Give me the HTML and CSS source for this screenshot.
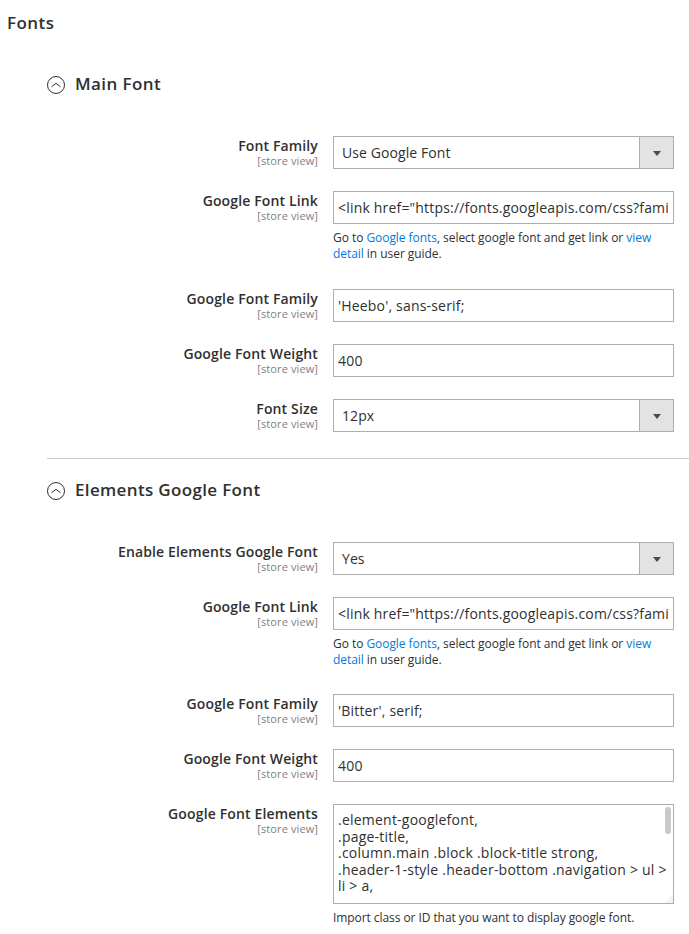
FILE: index.html
```html
<!DOCTYPE html>
<html lang="en">
<head>
<meta charset="utf-8">
<title>Fonts</title>
<link rel="stylesheet" href="styles.css">
</head>
<body>
<h1 class="page-title">Fonts</h1>
<section class="group">
  <h2 class="group-title"><svg class="toggle" viewBox="0 0 18 18"><circle cx="9" cy="9" r="8.5"/><path d="M4.5 10.8 9 7.3l4.5 3.5"/></svg>Main Font</h2>
  <div class="field"><div class="label"><b>Font Family</b><small>[store view]</small></div><div class="control"><div class="box select"><span>Use Google Font</span><i class="arrow"></i></div></div></div>
  <div class="field"><div class="label"><b>Google Font Link</b><small>[store view]</small></div><div class="control"><div class="box"><span class="value">&lt;link href="https://fonts.googleapis.com/css?fami</span></div><p class="note">Go to <a>Google fonts</a>, select google font and get link or <a>view detail</a> in user guide.</p></div></div>
  <div class="field"><div class="label"><b>Google Font Family</b><small>[store view]</small></div><div class="control"><div class="box"><span class="value">'Heebo', sans-serif;</span></div></div></div>
  <div class="field"><div class="label"><b>Google Font Weight</b><small>[store view]</small></div><div class="control"><div class="box"><span class="value">400</span></div></div></div>
  <div class="field"><div class="label"><b>Font Size</b><small>[store view]</small></div><div class="control"><div class="box select"><span>12px</span><i class="arrow"></i></div></div></div>
</section>
<section class="group">
  <h2 class="group-title"><svg class="toggle" viewBox="0 0 18 18"><circle cx="9" cy="9" r="8.5"/><path d="M4.5 10.8 9 7.3l4.5 3.5"/></svg>Elements Google Font</h2>
  <div class="field"><div class="label"><b>Enable Elements Google Font</b><small>[store view]</small></div><div class="control"><div class="box select"><span>Yes</span><i class="arrow"></i></div></div></div>
  <div class="field"><div class="label"><b>Google Font Link</b><small>[store view]</small></div><div class="control"><div class="box"><span class="value">&lt;link href="https://fonts.googleapis.com/css?fami</span></div><p class="note">Go to <a>Google fonts</a>, select google font and get link or <a>view detail</a> in user guide.</p></div></div>
  <div class="field"><div class="label"><b>Google Font Family</b><small>[store view]</small></div><div class="control"><div class="box"><span class="value">'Bitter', serif;</span></div></div></div>
  <div class="field"><div class="label"><b>Google Font Weight</b><small>[store view]</small></div><div class="control"><div class="box"><span class="value">400</span></div></div></div>
  <div class="field"><div class="label"><b>Google Font Elements</b><small>[store view]</small></div><div class="control"><div class="box area">.element-googlefont,<br>.page-title,<br>.column.main .block .block-title strong,<br>.header-1-style .header-bottom .navigation &gt; ul &gt;<br>li &gt; a,<i class="thumb"></i><i class="grip"></i></div><p class="note">Import class or ID that you want to display google font.</p></div></div>
</section>
</body>
</html>
```
FILE: styles.css
```css
* { box-sizing: border-box; }
body { margin: 0; height: 934px; overflow: hidden; background: #fff; color: #303030; font: 14px/19px "Open Sans", sans-serif; }
.page-title { margin: 0; padding: 12px 0 0 7px; height: 52px; font-size: 17px; line-height: 22px; font-weight: 600; letter-spacing: .45px; }
.group { margin-left: 47px; height: 407px; border-bottom: 1px solid #ccc; }
.group + .group { border: 0; }
.group-title { display: flex; align-items: flex-start; gap: 10px; margin: 0; padding-top: 20px; height: 84px; font-size: 17px; line-height: 24px; font-weight: 600; letter-spacing: .4px; }
.group + .group .group-title { height: 83px; padding-top: 19px; letter-spacing: .34px; }
.toggle { width: 18px; height: 18px; margin-top: 4px; fill: none; stroke: #303030; stroke-width: 1; }
.field { display: flex; gap: 15px; margin-bottom: 22px; }
.label { width: 271px; text-align: right; white-space: nowrap; }
.label b { display: block; font-weight: 600; line-height: 20px; letter-spacing: .14px; }
.label small { display: block; margin-top: -1px; font-size: 11px; line-height: 11px; letter-spacing: .1px; color: #808080; }
.control { width: 341px; }
.box { display: flex; align-items: center; height: 33px; border: 1px solid #adadad; padding-left: 4px; white-space: nowrap; overflow: hidden; letter-spacing: .185px; }
.value { width: 331px; overflow: hidden; }
.select { padding-left: 8px; justify-content: space-between; letter-spacing: .08px; }
.arrow { display: flex; align-items: center; justify-content: center; width: 34px; height: 31px; border-left: 1px solid #adadad; background: #e3e3e3; }
.arrow::after { content: ""; border: 4px solid transparent; border-top: 5px solid #514943; border-bottom: 0; margin-top: 1px; }
.note { margin: 6px 0 0; font-size: 12px; line-height: 16px; padding-bottom: 5px; letter-spacing: -.05px; }
.group + .group .note { padding-bottom: 4px; }
.area + .note { letter-spacing: -.07px; }
.note a { color: #007bdb; }
.area { position: relative; display: block; height: 100px; padding-top: 7px; line-height: 16.6px; letter-spacing: .22px; }
.thumb { position: absolute; right: 2px; top: 2px; width: 6px; height: 27px; border-radius: 3px; background: #c9c9c9; }
.grip { position: absolute; right: 0; bottom: 0; width: 9px; height: 9px; background: linear-gradient(135deg, transparent 50%, #f3f3f3 50%); }
```
